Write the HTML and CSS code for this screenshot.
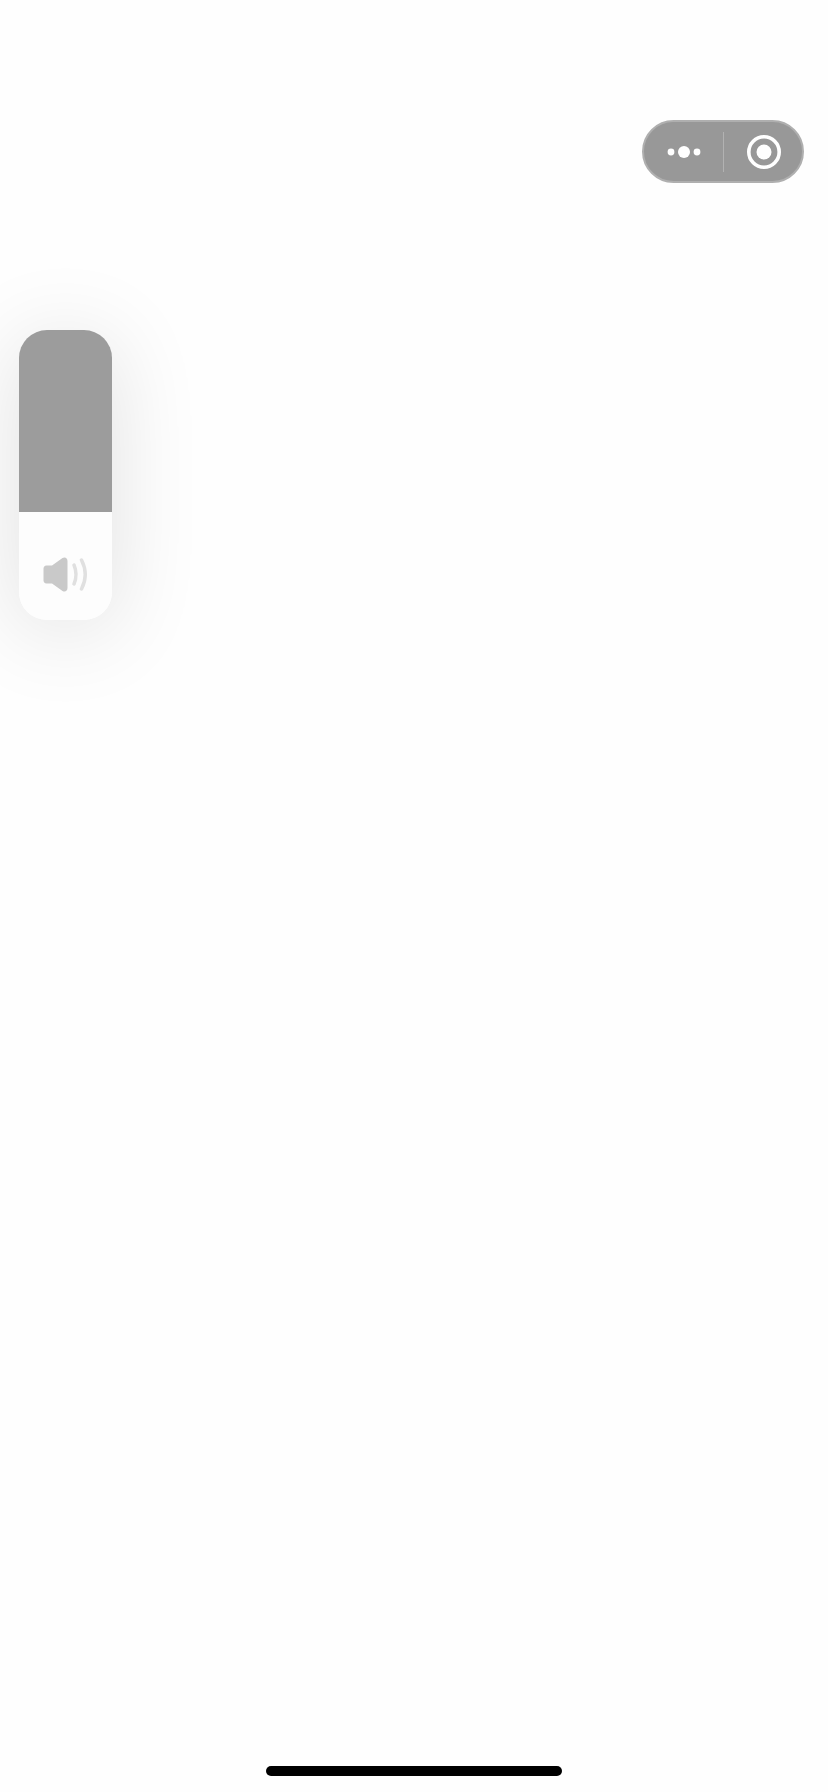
FILE: index.html
```html
<!DOCTYPE html>
<html lang="en">
<head>
<meta charset="utf-8">
<title>Volume</title>
<link rel="stylesheet" href="styles.css">
</head>
<body>
<div class="screen">
  <div class="capsule">
    <div class="capsule-side">
      <svg class="icon-more" width="44" height="16" viewBox="0 0 44 16"><circle cx="9" cy="8" r="3.4"/><circle cx="22" cy="8" r="6"/><circle cx="35" cy="8" r="3.4"/></svg>
    </div>
    <div class="capsule-divider"></div>
    <div class="capsule-side">
      <svg class="icon-record" width="38" height="38" viewBox="0 0 38 38"><circle class="ring" cx="19" cy="19" r="15.2"/><circle class="dot" cx="19" cy="19" r="7.5"/></svg>
    </div>
  </div>
  <div class="volume">
    <div class="volume-empty"></div>
    <div class="volume-level">
      <svg width="46" height="40" viewBox="0 0 46 40">
        <path class="speaker" d="M3.500 10.500H9L19.500 3C22 1.500 24.500 3 24.500 6V33C24.500 36 22 37.500 19.500 36L9 28.500H3.500C1.500 28.500 .5 27 .5 25.500V13.500C.5 12 1.500 10.500 3.500 10.500z"/>
        <path class="wave" d="M31 10Q35 19.500 31 29"/>
        <path class="wave" d="M38.500 5Q46 19.500 38.500 34"/>
      </svg>
    </div>
  </div>
  <div class="home-bar"></div>
</div>
</body>
</html>
```
FILE: styles.css
```css
html, body {
  margin: 0;
  padding: 0;
  background: #fefefe;
}

.screen {
  display: flex;
  flex-direction: column;
  height: 1792px;
  box-sizing: border-box;
  padding: 120px 24px 16px 19px;
  overflow: hidden;
}

.capsule {
  display: flex;
  align-items: center;
  align-self: flex-end;
  width: 162px;
  height: 63px;
  box-sizing: border-box;
  background: #989898;
  border: 2px solid #afafaf;
  border-radius: 32px;
}

.capsule-side {
  flex: 1;
  display: flex;
  justify-content: center;
  align-items: center;
}

.capsule-divider {
  width: 1px;
  height: 40px;
  background: #b2b2b2;
}

.icon-more {
  margin-left: 1px;
}

.icon-more circle {
  fill: #fff;
}

.icon-record {
  margin-left: 3px;
}

.icon-record .ring {
  fill: none;
  stroke: #fff;
  stroke-width: 3.6;
}

.icon-record .dot {
  fill: #fff;
}

.volume {
  display: flex;
  flex-direction: column;
  width: 93px;
  height: 290px;
  margin-top: 147px;
  border-radius: 28px;
  overflow: hidden;
  box-shadow: 0 10px 90px rgba(0, 0, 0, 0.12);
}

.volume-empty {
  height: 182px;
  background: #9c9c9c;
}

.volume-level {
  flex: 1;
  display: flex;
  justify-content: center;
  padding-top: 43px;
  background: #fdfdfd;
}

.speaker {
  fill: #c9c9c9;
}

.wave {
  fill: none;
  stroke: #e0e0e0;
  stroke-width: 3.5;
  stroke-linecap: round;
}

.home-bar {
  width: 296px;
  height: 10px;
  margin-top: auto;
  margin-left: 247px;
  align-self: flex-start;
  background: #000;
  border-radius: 5px;
}
```
